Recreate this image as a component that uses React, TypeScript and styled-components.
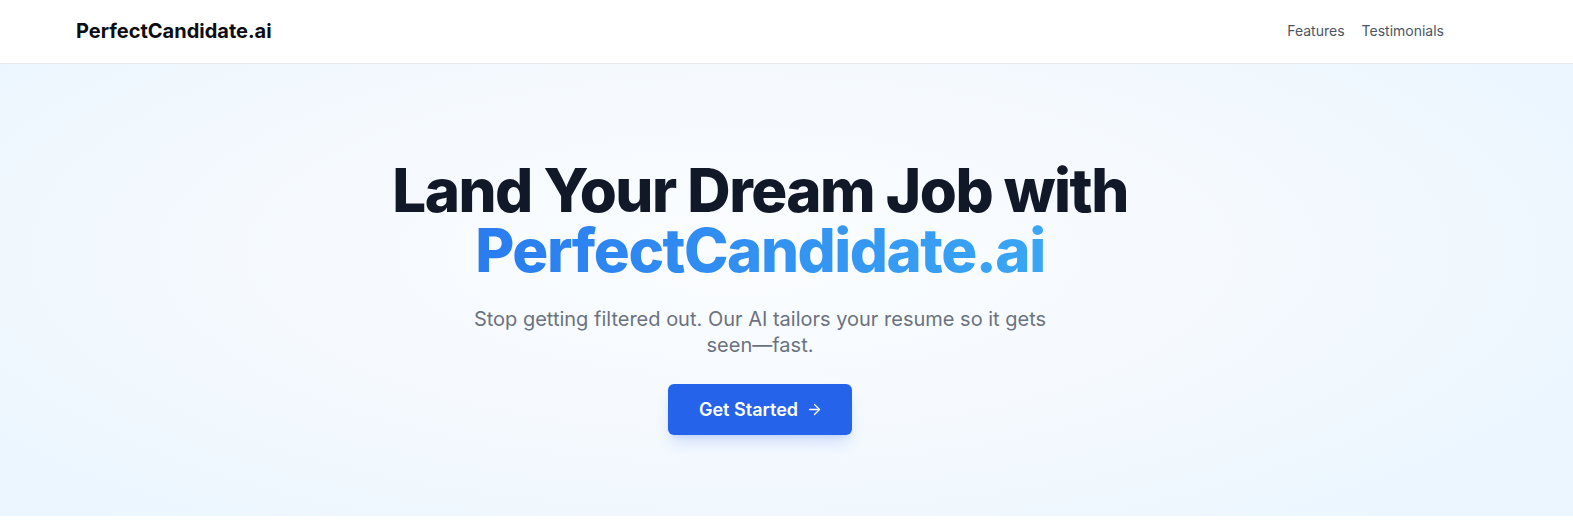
import React from "react";
import styled, { createGlobalStyle } from "styled-components";
import { ArrowRight } from "lucide-react";

const GlobalStyle = createGlobalStyle`
  * { box-sizing: border-box; }
  html, body {
    margin: 0;
    padding: 0;
    background: #ffffff;
    font-family: Inter, "Noto Sans", "Liberation Sans", sans-serif;
    -webkit-font-smoothing: antialiased;
  }
`;

const Page = styled.div`
  width: 100%;
  min-height: 532px;
  background: #ffffff;
`;

const Header = styled.header`
  height: 64px;
  background: #ffffff;
  border-bottom: 1px solid #e5e7eb;
`;

const HeaderInner = styled.div`
  width: 1520px;
  height: 100%;
  padding: 0 76px;
  display: flex;
  align-items: center;
  justify-content: space-between;
`;

const Logo = styled.a`
  font-size: 20px;
  font-weight: 700;
  color: #0b0d12;
  text-decoration: none;
  margin-top: -2px;
`;

const Nav = styled.nav`
  display: flex;
  align-items: center;
  gap: 17px;
  margin-top: -2px;
`;

const NavLink = styled.a`
  font-size: 14px;
  color: #4b5563;
  text-decoration: none;
`;

const Hero = styled.section`
  height: 452px;
  background: radial-gradient(
    ellipse 62% 78% at 47% 42%,
    #fbfdff 0%,
    #f4f9fe 55%,
    #ebf6fe 100%
  );
`;

const HeroInner = styled.div`
  width: 1520px;
  padding-top: 96px;
  display: flex;
  flex-direction: column;
  align-items: center;
  text-align: center;
`;

const Title = styled.h1`
  margin: 0;
  font-size: 60px;
  line-height: 60px;
  font-weight: 800;
  letter-spacing: -1.5px;
  color: #111827;
`;

const Accent = styled.span`
  display: inline-block;
  background: linear-gradient(90deg, #2a7cef 0%, #3aa6f4 100%);
  -webkit-background-clip: text;
  background-clip: text;
  -webkit-text-fill-color: transparent;
`;

const Subtitle = styled.p`
  margin: 26px 0 0;
  max-width: 600px;
  font-size: 20px;
  line-height: 26px;
  color: #6b7280;
`;

const CtaButton = styled.button`
  margin-top: 26px;
  height: 51px;
  padding: 0 29px 0 31px;
  display: inline-flex;
  align-items: center;
  gap: 8px;
  border: none;
  border-radius: 6px;
  background: #2563eb;
  color: #ffffff;
  font-family: inherit;
  font-size: 18px;
  font-weight: 600;
  cursor: pointer;
  box-shadow: 0 10px 15px -3px rgba(37, 99, 235, 0.18),
    0 4px 6px -4px rgba(37, 99, 235, 0.18);
`;

export default function App() {
  return (
    <Page>
      <GlobalStyle />
      <Header>
        <HeaderInner>
          <Logo href="#">PerfectCandidate.ai</Logo>
          <Nav>
            <NavLink href="#features">Features</NavLink>
            <NavLink href="#testimonials">Testimonials</NavLink>
          </Nav>
        </HeaderInner>
      </Header>
      <Hero>
        <HeroInner>
          <Title>
            Land Your Dream Job with
            <br />
            <Accent>PerfectCandidate.ai</Accent>
          </Title>
          <Subtitle>
            Stop getting filtered out. Our AI tailors your resume so it gets
            seen—fast.
          </Subtitle>
          <CtaButton>
            Get Started
            <ArrowRight size={17} strokeWidth={1.8} />
          </CtaButton>
        </HeroInner>
      </Hero>
    </Page>
  );
}
